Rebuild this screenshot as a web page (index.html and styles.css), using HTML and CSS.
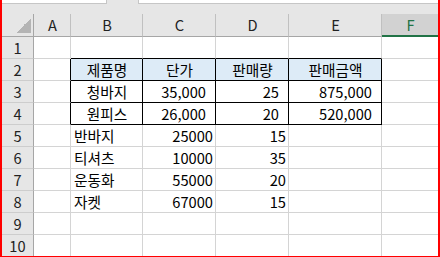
FILE: index.html
```html
<!DOCTYPE html>
<html lang="ko">
<head>
  <meta charset="UTF-8" />
  <title>판매 현황</title>
  <link rel="stylesheet" href="styles.css">
</head>
<body>
  <div class="sheet">
    <div class="topbar">
      <div class="namebox"></div>
      <div class="fx"></div>
    </div>
    <div class="grid">
      <div class="c corner"></div>
      <div class="c ch">A</div>
      <div class="c ch">B</div>
      <div class="c ch">C</div>
      <div class="c ch">D</div>
      <div class="c ch">E</div>
      <div class="c ch sel">F</div>

      <div class="c rh">1</div>
      <div class="c"></div>
      <div class="c tt"></div>
      <div class="c tt"></div>
      <div class="c tt"></div>
      <div class="c tt"></div>
      <div class="c"></div>

      <div class="c rh">2</div>
      <div class="c tl"></div>
      <div class="c tb th">제품명</div>
      <div class="c tb th">단가</div>
      <div class="c tb th">판매량</div>
      <div class="c tb th">판매금액</div>
      <div class="c"></div>

      <div class="c rh">3</div>
      <div class="c tl"></div>
      <div class="c tb ctr">청바지</div>
      <div class="c tb num">35,000</div>
      <div class="c tb num">25</div>
      <div class="c tb num">875,000</div>
      <div class="c"></div>

      <div class="c rh">4</div>
      <div class="c tl"></div>
      <div class="c tb ctr">원피스</div>
      <div class="c tb num">26,000</div>
      <div class="c tb num">20</div>
      <div class="c tb num">520,000</div>
      <div class="c"></div>

      <div class="c rh">5</div>
      <div class="c"></div>
      <div class="c">반바지</div>
      <div class="c num">25000</div>
      <div class="c num">15</div>
      <div class="c"></div>
      <div class="c"></div>

      <div class="c rh">6</div>
      <div class="c"></div>
      <div class="c">티셔츠</div>
      <div class="c num">10000</div>
      <div class="c num">35</div>
      <div class="c"></div>
      <div class="c"></div>

      <div class="c rh">7</div>
      <div class="c"></div>
      <div class="c">운동화</div>
      <div class="c num">55000</div>
      <div class="c num">20</div>
      <div class="c"></div>
      <div class="c"></div>

      <div class="c rh">8</div>
      <div class="c"></div>
      <div class="c">자켓</div>
      <div class="c num">67000</div>
      <div class="c num">15</div>
      <div class="c"></div>
      <div class="c"></div>

      <div class="c rh">9</div>
      <div class="c"></div>
      <div class="c"></div>
      <div class="c"></div>
      <div class="c"></div>
      <div class="c"></div>
      <div class="c"></div>

      <div class="c rh">10</div>
      <div class="c"></div>
      <div class="c"></div>
      <div class="c"></div>
      <div class="c"></div>
      <div class="c"></div>
      <div class="c"></div>
    </div>
  </div>
</body>
</html>
```

FILE: styles.css
```css
body {
  margin: 0;
  background: #fff;
  font-family: "Noto Sans CJK KR", "Noto Sans", sans-serif;
}
.sheet {
  width: 440px;
  height: 257px;
  box-sizing: border-box;
  border-left: 2px solid #f00;
  border-right: 2px solid #f00;
  border-bottom: 1px solid #f00;
  overflow: hidden;
  background: #fff;
}
.topbar {
  height: 14px;
  background: #e6e6e6;
  display: flex;
  align-items: flex-start;
}
.namebox, .fx {
  height: 4px;
  box-sizing: border-box;
  background: #fff;
  border-bottom: 1px solid #c6c6c6;
}
.namebox {
  width: 105px;
  border-right: 1px solid #c6c6c6;
}
.fx {
  flex: 1;
  margin-left: 31px;
  border-left: 1px solid #c6c6c6;
}
.grid {
  display: grid;
  grid-template-columns: 32px 37px 72px 73px 73px 93px 56px;
  grid-template-rows: 23px;
  grid-auto-rows: 22px;
}
.c {
  box-sizing: border-box;
  border-right: 1px solid #d4d4d4;
  border-bottom: 1px solid #d4d4d4;
  padding: 0 2px 0 3px;
  font-size: 14.67px;
  line-height: 21px;
  color: #000;
  white-space: nowrap;
  overflow: hidden;
}
.c:nth-child(7n) {
  border-right: 0;
}
.corner {
  background: #e6e6e6 linear-gradient(to bottom right, transparent 50%, #b4b4b4 50%) no-repeat right 2px bottom 3px / 15px 15px;
  border-right-color: #a6a6a6;
  border-bottom-color: #a6a6a6;
}
.ch {
  background: #e6e6e6;
  border-right-color: #c0c0c0;
  border-bottom-color: #a6a6a6;
  text-align: center;
  line-height: 22px;
  color: #222;
}
.ch.sel {
  background: #d2d2d2;
  color: #217346;
  border-bottom: 2px solid #217346;
  line-height: 21px;
}
.rh {
  background: #e6e6e6;
  border-right-color: #a6a6a6;
  border-bottom-color: #cdcdcd;
  text-align: center;
  padding: 0;
  color: #222;
}
.tt {
  border-bottom-color: #000;
}
.tl {
  border-right-color: #000;
}
.tb {
  border-right-color: #000;
  border-bottom-color: #000;
}
.th {
  background: #ddebf7;
  text-align: center;
}
.ctr {
  text-align: center;
}
.num {
  text-align: right;
}
.tb.num {
  padding-right: 9px;
}
```
